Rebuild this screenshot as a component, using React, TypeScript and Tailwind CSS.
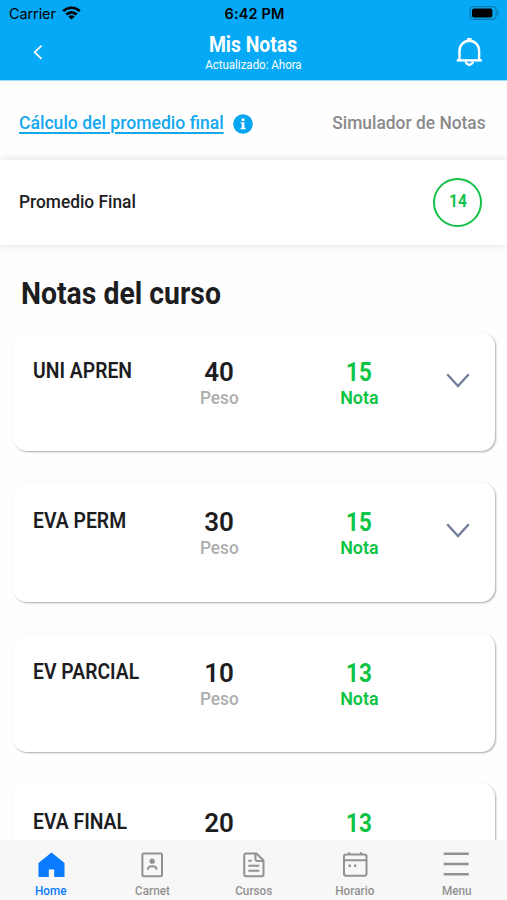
import clsx from "clsx";
import React from "react";

interface IGrade {
  name: string;
  weight: number;
  grade: number;
  expandable: boolean;
}

const grades: IGrade[] = [
  { name: "UNI APREN", weight: 40, grade: 15, expandable: true },
  { name: "EVA PERM", weight: 30, grade: 15, expandable: true },
  { name: "EV PARCIAL", weight: 10, grade: 13, expandable: false },
  { name: "EVA FINAL", weight: 20, grade: 13, expandable: false },
];

function StatusBar() {
  return (
    <div className="grid h-7 grid-cols-3 items-center pl-[9px] pr-[7px] font-['Inter',sans-serif] text-black">
      <div className="flex items-center gap-[6px]">
        <span className="text-[14.5px] tracking-[-0.1px]">Carrier</span>
        <svg className="-mt-[2px]" width="19" height="14" viewBox="0 0 19 14" fill="none" stroke="currentColor" strokeWidth="2.6">
          <path d="M1.2 5.2a11.8 11.8 0 0 1 16.6 0" />
          <path d="M4.3 8.5a7.4 7.4 0 0 1 10.4 0" />
          <path d="M9.5 13.6 6.3 10.5a4.5 4.5 0 0 1 6.4 0z" fill="currentColor" stroke="none" />
        </svg>
      </div>
      <span className="text-center text-[14.5px] font-semibold tracking-[0.15px]">6:42 PM</span>
      <svg className="-mt-[2px] justify-self-end" width="31" height="14" viewBox="0 0 31 14">
        <rect x="1.1" y="0.6" width="26" height="12.8" rx="3.6" fill="none" stroke="#0878ae" strokeWidth="1.2" />
        <rect x="3" y="2.4" width="20.4" height="9.2" rx="2" fill="#000" />
        <path d="M28.6 4.6a2.7 2.7 0 0 1 0 4.8z" fill="#0878ae" />
      </svg>
    </div>
  );
}

function Header() {
  return (
    <header className="h-[81px] shrink-0 border-b border-[#a0def5] bg-[#05a9f5]">
      <StatusBar />
      <div className="grid grid-cols-3 items-start text-white">
        <svg className="ml-8 mt-4" width="12" height="16" viewBox="0 0 12 16" fill="none" stroke="currentColor" strokeWidth="1.7">
          <path d="M9.6 1.6 2.6 8.2l7 6.6" />
        </svg>
        <div className="flex flex-col items-center whitespace-nowrap">
          <h1 className="mt-[5px] scale-x-90 text-[21.5px] leading-6 font-bold">Mis Notas</h1>
          <p className="scale-x-92 text-[12.5px] leading-[15px]">Actualizado: Ahora</p>
        </div>
        <svg className="mt-[9px] mr-[24px] justify-self-end" width="28" height="30" viewBox="0 0 28 30" fill="none" stroke="currentColor" strokeWidth="2.4">
          <path d="M4.5 23.4V13.5a9.8 9.8 0 0 1 19.6 0v9.9" />
          <path d="M1.8 23.4h25" />
          <path d="M14.3 4V1" strokeWidth="4.5" />
          <path d="M10.8 24.4a3.5 3.3 0 0 0 7 0" />
        </svg>
      </div>
    </header>
  );
}

function GradeCard({ item }: { item: IGrade }) {
  return (
    <div className="flex h-[119.3px] shrink-0 items-start rounded-[14px] bg-white pt-[25px] pl-5 shadow-[1px_1px_2px_rgba(0,0,0,0.33)]">
      <div className="w-[146px] whitespace-nowrap">
        <h3 className="inline-block origin-left scale-x-88 text-[22px] leading-7 font-semibold">{item.name}</h3>
      </div>
      <div className="flex w-20 flex-col items-center">
        <span className="mt-px text-[26px] leading-[29px] font-semibold tracking-[-0.2px]">{item.weight}</span>
        <span className="scale-x-91 text-[19px] leading-[22px] font-medium text-[#adadad]">Peso</span>
      </div>
      <div className="ml-[60px] flex w-20 flex-col items-center text-[#0cc443]">
        <span className="mt-px scale-x-86 text-[26px] leading-[29px] font-bold">{item.grade}</span>
        <span className="scale-x-94 text-[19px] leading-[22px] font-semibold">Nota</span>
      </div>
      {item.expandable && (
        <svg className="mt-4 ml-[46.5px]" width="24" height="16" viewBox="0 0 24 16" fill="none" stroke="#737d9c" strokeWidth="2.3">
          <path d="M1.2 1.2 12 13 22.8 1.2" />
        </svg>
      )}
    </div>
  );
}

function TabItem({ label, active, children }: { label: string; active?: boolean; children: React.ReactNode }) {
  return (
    <a className={clsx("flex flex-1 flex-col items-center", active ? "text-[#087bff]" : "text-[#929292]")}>
      <svg width="28" height="28" viewBox="0 0 28 28" fill="none" stroke="currentColor" strokeWidth="2">
        {children}
      </svg>
      <span className="mt-[5px] scale-x-94 text-[12.5px] leading-[14px] font-medium">{label}</span>
    </a>
  );
}

function TabBar() {
  return (
    <nav className="flex h-[60px] shrink-0 bg-[#f7f7f7] pt-[11px]">
      <TabItem label="Home" active>
        <path d="M1.5 26V12L14.5 1.5 27.5 12v14H17.2v-7.5h-5.4V26z" fill="currentColor" stroke="none" />
      </TabItem>
      <TabItem label="Carnet">
        <rect x="4.4" y="2.5" width="19.6" height="22.8" rx="1.2" />
        <circle cx="14.2" cy="10.2" r="2.6" fill="currentColor" stroke="none" />
        <path d="M10 18.8V18c0-3.8 8.4-3.8 8.4 0v.8" />
      </TabItem>
      <TabItem label="Cursos">
        <path d="M6.2 2.5h10.3l7 7v13.7a2 2 0 0 1-2 2H6.2a2 2 0 0 1-2-2V4.5a2 2 0 0 1 2-2z" />
        <path d="M15.5 2.5V8a2 2 0 0 0 2 2h6" />
        <path d="M8.3 9.8h3.5M8.3 14.7h11M8.3 19.7h11" />
      </TabItem>
      <TabItem label="Horario">
        <rect x="3" y="3.5" width="22.5" height="21.3" rx="2" />
        <path d="M3 9.3h22.5M8.3 1.2v2.5M20 1.2v2.5" />
        <path d="M7.5 14.7h2.4M13 14.7h2.4" strokeWidth="2.4" />
      </TabItem>
      <TabItem label="Menu">
        <path d="M1.7 2.8h25M1.7 13h25M1.7 23.3h25" strokeWidth="2.4" />
      </TabItem>
    </nav>
  );
}

export default function App() {
  return (
    <div className="flex h-[900px] w-[507px] flex-col overflow-hidden bg-[#fefefe] font-['Roboto',sans-serif] text-[#1d1d1f]">
      <Header />
      <div className="flex h-[79px] shrink-0 items-center justify-between pt-[5px] pr-[21px] pl-[19px] text-[19px] font-medium whitespace-nowrap">
        <div className="flex items-center">
          <a className="w-[214px] text-[#15a8f0]">
            <span className="inline-block origin-left scale-x-[.925] underline decoration-[1.5px] underline-offset-[3px]">Cálculo del promedio final</span>
          </a>
          <svg className="mt-px" width="20" height="20" viewBox="0 0 20 20">
            <circle cx="10" cy="10" r="9.8" fill="#07a6f2" />
            <path d="M8.7 4.6h2.7v2.3H8.7zM7.8 8.2h3.6v5.6h1.2v1.5H7.6v-1.5h1.2V9.7h-1z" fill="#fff" />
          </svg>
        </div>
        <span className="origin-right scale-x-[.915] text-[#8a8a8a]">Simulador de Notas</span>
      </div>
      <section className="flex h-[85px] shrink-0 items-center justify-between bg-white pr-[25px] pl-[19px] shadow-[0_0_9px_rgba(0,0,0,0.13)]">
        <span className="origin-left scale-x-[.912] text-[19px] font-medium">Promedio Final</span>
        <div className="flex size-[49px] items-center justify-center rounded-full border-2 border-[#14c24a] text-[19px] font-bold text-[#14c24a]">
          <span className="-mt-[2px] scale-x-82">14</span>
        </div>
      </section>
      <main className="flex min-h-0 flex-1 flex-col overflow-hidden pr-3 pl-[13px]">
        <h2 className="mt-[30px] mb-[19px] ml-[7.5px] origin-left scale-x-[.915] text-[31px] leading-[38px] font-bold">Notas del curso</h2>
        <div className="flex flex-col gap-[31px]">
          {grades.map((item) => (
            <GradeCard key={item.name} item={item} />
          ))}
        </div>
      </main>
      <TabBar />
    </div>
  );
}
